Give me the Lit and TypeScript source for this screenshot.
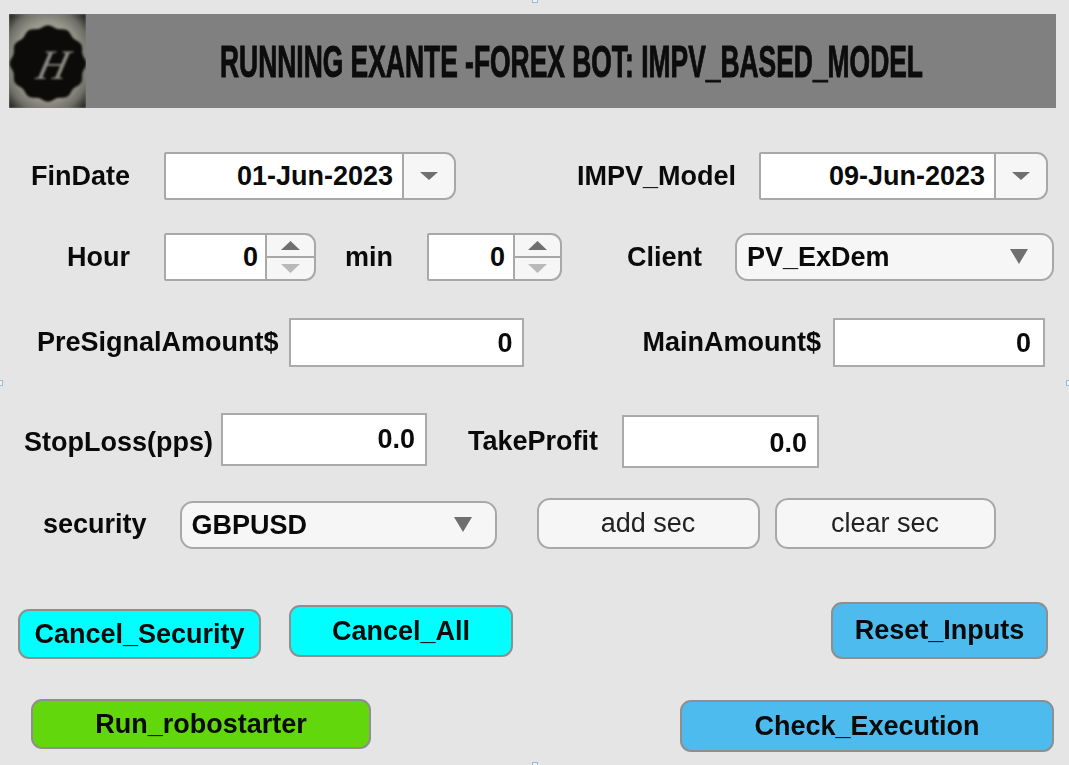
import { LitElement, html, css } from 'lit';
import { customElement } from 'lit/decorators.js';

const LOGO_EDGE = Array.from({ length: 96 }, (_, i) => {
  const a = (i / 96) * Math.PI * 2;
  const r = 37 + 1.3 * Math.cos(a * 12);
  return `${(39 + r * Math.cos(a)).toFixed(1)},${(49.5 + r * Math.sin(a)).toFixed(1)}`;
}).join(' ');

@customElement('app-root')
export class AppRoot extends LitElement {
  static override styles = css`
    :host {
      display: block;
      width: 1069px;
      height: 765px;
      overflow: hidden;
      position: relative;
      background: #e5e5e5;
      font-family: 'Liberation Sans', Arial, sans-serif;
      color: #0a0a0a;
    }

    .page {
      padding: 14px 0 0 9px;
      filter: blur(0.45px);
    }

    /* header */
    .banner {
      display: flex;
      width: 1047px;
      height: 94px;
      background: #808080;
      align-items: center;
      overflow: hidden;
    }
    .logo {
      display: block;
      width: 77px;
      height: 94px;
      flex: none;
    }
    .logo-art {
      filter: blur(0.8px);
    }
    .logo text {
      font-family: 'Liberation Serif', serif;
      font-style: italic;
      font-size: 42px;
      fill: #8d8b82;
    }
    .title {
      flex: none;
      margin: 2px 0 0 134px;
      font-family: 'Liberation Sans', sans-serif;
      font-weight: 700;
      font-size: 45px;
      line-height: 92px;
      white-space: nowrap;
      color: #0c0c0c;
      -webkit-text-stroke: 1px #0c0c0c;
      transform: scaleX(0.587);
      transform-origin: left center;
    }

    /* rows */
    .row {
      display: flex;
      align-items: flex-start;
    }
    .row-1 { margin-top: 44px; height: 48px; }
    .row-2 { margin-top: 33px; height: 48px; }
    .row-3 { margin-top: 37px; height: 49px; }
    .row-4 { margin-top: 46px; height: 55px; }
    .row-5 { margin-top: 30px; height: 51px; }
    .row-6 { margin-top: 53px; height: 57px; }
    .row-7 { margin-top: 40px; height: 53px; }

    .label {
      flex: none;
      font-size: 27px;
      font-weight: 700;
      line-height: 48px;
      white-space: nowrap;
    }

    /* controls */
    .picker, .spinner {
      display: flex;
      flex: none;
      height: 48px;
      box-sizing: border-box;
      border: 2px solid #a8a8a8;
      border-radius: 2px 11px 11px 2px;
      overflow: hidden;
      background: #f6f6f6;
    }
    .value {
      flex: 1;
      background: #fff;
      border-right: 2px solid #a8a8a8;
      text-align: right;
      font-size: 27px;
      font-weight: 700;
      line-height: 45px;
      white-space: nowrap;
    }
    .picker .value { padding-right: 9px; }
    .spinner .value { padding-right: 7px; }
    .caret {
      display: flex;
      flex: none;
      width: 50px;
      align-items: center;
      justify-content: center;
    }
    .tri {
      display: block;
    }
    .steppers {
      display: flex;
      flex: none;
      flex-direction: column;
    }
    .stepper {
      display: flex;
      flex: 1;
      align-items: center;
      justify-content: center;
    }
    .stepper + .stepper {
      border-top: 2px solid #a8a8a8;
    }

    .field {
      flex: none;
      box-sizing: border-box;
      height: 49px;
      border: 2px solid #aaa;
      background: #fff;
      text-align: right;
      font-size: 27px;
      font-weight: 700;
      line-height: 47px;
      padding-right: 9px;
    }

    .select {
      display: flex;
      flex: none;
      box-sizing: border-box;
      height: 48px;
      align-items: center;
      justify-content: space-between;
      border: 2px solid #a8a8a8;
      border-radius: 13px;
      background: #f6f6f6;
      font-size: 27px;
      font-weight: 700;
      padding: 0 23px 2px 10px;
    }
    .select span {
      margin-top: 2px;
    }

    .btn {
      flex: none;
      box-sizing: border-box;
      padding: 1px 0 0;
      border: 2px solid #8f8f8f;
      border-radius: 11px;
      font: 700 27px 'Liberation Sans', Arial, sans-serif;
      color: #0a0a0a;
      white-space: nowrap;
    }
    .btn.plain {
      height: 51px;
      padding: 0 0 1px;
      border-color: #a8a8a8;
      border-radius: 13px;
      background: #f6f6f6;
      font-weight: 400;
      color: #222;
    }
    .btn.cyan { background: #00ffff; }
    .btn.blue { background: #4dbbee; }
    .btn.green { background: #62d80c; }

    /* per control placement */
    .l-findate { margin-left: 22px; }
    .c-findate { margin-left: 34px; width: 292px; }
    .l-impv { margin-left: 121px; }
    .c-impv { margin-left: 23px; width: 289px; }
    .l-hour { margin-left: 58px; }
    .c-hour { margin-left: 34px; width: 152px; }
    .c-hour .steppers { width: 47px; }
    .l-min { margin-left: 29px; }
    .c-min { margin-left: 34px; width: 135px; }
    .c-min .steppers { width: 45px; }
    .c-min .value { padding-right: 8px; }
    .l-client { margin-left: 65px; }
    .c-client { margin-left: 33px; width: 319px; padding-right: 24px; }
    .l-pre { margin-left: 28px; }
    .c-pre { margin-left: 10px; width: 235px; }
    .l-main { margin-left: 119px; }
    .c-main { margin-left: 12px; width: 212px; padding-right: 12px; }
    .l-stop { margin-left: 15px; line-height: 58px; }
    .c-stop { margin-left: 8px; width: 206px; height: 53px; line-height: 49px; padding-right: 10px; }
    .l-take { margin-left: 41px; line-height: 56px; }
    .c-take { margin-left: 24px; margin-top: 2px; width: 197px; height: 53px; line-height: 53px; padding-right: 10px; }
    .l-sec { margin-left: 34px; line-height: 52px; }
    .c-sec { margin-left: 33px; margin-top: 3px; width: 317px; }
    .b-add { margin-left: 40px; width: 223px; }
    .b-clear { margin-left: 15px; width: 221px; }
    .b-cancel-sec { margin-left: 9px; margin-top: 7px; width: 243px; height: 50px; }
    .b-cancel-all { margin-left: 28px; margin-top: 3px; width: 224px; height: 52px; }
    .b-reset { margin-left: 318px; width: 217px; height: 57px; padding: 0 0 1px; }
    .b-run { margin-left: 22px; width: 340px; height: 50px; }
    .b-check { margin-left: 309px; margin-top: 1px; width: 374px; height: 52px; }

    /* resize handles of the captured window */
    .handle {
      position: absolute;
      width: 6px;
      height: 6px;
      box-sizing: border-box;
      border: 1px solid #9dbad3;
      background: #eef2f5;
    }
    .h-top { left: 532px; top: -3px; }
    .h-left { left: -3px; top: 380px; }
    .h-right { left: 1066px; top: 380px; }
    .h-bottom { left: 532px; top: 762px; }
  `;

  private _caret(w: number, h: number, fill = '#6f6f6f') {
    return html`<svg class="tri" width=${w} height=${h} viewBox="0 0 ${w} ${h}">
      <polygon points="0,0 ${w},0 ${w / 2},${h}" fill=${fill}></polygon>
    </svg>`;
  }

  private _date(cls: string, value: string) {
    return html`<div class="picker ${cls}">
      <div class="value">${value}</div>
      <div class="caret">${this._caret(18, 8)}</div>
    </div>`;
  }

  private _spinner(cls: string) {
    return html`<div class="spinner ${cls}">
      <div class="value">0</div>
      <div class="steppers">
        <div class="stepper">
          <svg class="tri" width="19" height="9" viewBox="0 0 19 9"><polygon points="0,9 19,9 9.5,0" fill="#6f6f6f"></polygon></svg>
        </div>
        <div class="stepper">${this._caret(19, 9, '#b9b9b9')}</div>
      </div>
    </div>`;
  }

  private _select(cls: string, value: string) {
    return html`<div class="select ${cls}">
      <span>${value}</span>
      ${this._caret(18, 15)}
    </div>`;
  }

  override render() {
    return html`
      <div class="page">
        <header class="banner">
          <svg class="logo" viewBox="0 0 77 94" role="img" aria-label="H logo">
            <defs>
              <radialGradient id="vignette" cx="50%" cy="50%" r="68%">
                <stop offset="0.6" stop-color="#9a998e"></stop>
                <stop offset="0.82" stop-color="#6f6e67"></stop>
                <stop offset="1" stop-color="#262623"></stop>
              </radialGradient>
            </defs>
            <g class="logo-art">
              <rect width="77" height="94" fill="url(#vignette)"></rect>
              <polygon points=${LOGO_EDGE} fill="#0c0b09"></polygon>
              <text transform="translate(41 65) skewX(-14)" text-anchor="middle">H</text>
            </g>
          </svg>
          <h1 class="title">RUNNING EXANTE -FOREX BOT: IMPV_BASED_MODEL</h1>
        </header>

        <div class="row row-1">
          <span class="label l-findate">FinDate</span>
          ${this._date('c-findate', '01-Jun-2023')}
          <span class="label l-impv">IMPV_Model</span>
          ${this._date('c-impv', '09-Jun-2023')}
        </div>

        <div class="row row-2">
          <span class="label l-hour">Hour</span>
          ${this._spinner('c-hour')}
          <span class="label l-min">min</span>
          ${this._spinner('c-min')}
          <span class="label l-client">Client</span>
          ${this._select('c-client', 'PV_ExDem')}
        </div>

        <div class="row row-3">
          <span class="label l-pre">PreSignalAmount$</span>
          <div class="field c-pre">0</div>
          <span class="label l-main">MainAmount$</span>
          <div class="field c-main">0</div>
        </div>

        <div class="row row-4">
          <span class="label l-stop">StopLoss(pps)</span>
          <div class="field c-stop">0.0</div>
          <span class="label l-take">TakeProfit</span>
          <div class="field c-take">0.0</div>
        </div>

        <div class="row row-5">
          <span class="label l-sec">security</span>
          ${this._select('c-sec', 'GBPUSD')}
          <button class="btn plain b-add">add sec</button>
          <button class="btn plain b-clear">clear sec</button>
        </div>

        <div class="row row-6">
          <button class="btn cyan b-cancel-sec">Cancel_Security</button>
          <button class="btn cyan b-cancel-all">Cancel_All</button>
          <button class="btn blue b-reset">Reset_Inputs</button>
        </div>

        <div class="row row-7">
          <button class="btn green b-run">Run_robostarter</button>
          <button class="btn blue b-check">Check_Execution</button>
        </div>
      </div>
      <i class="handle h-top"></i>
      <i class="handle h-left"></i>
      <i class="handle h-right"></i>
      <i class="handle h-bottom"></i>
    `;
  }
}
